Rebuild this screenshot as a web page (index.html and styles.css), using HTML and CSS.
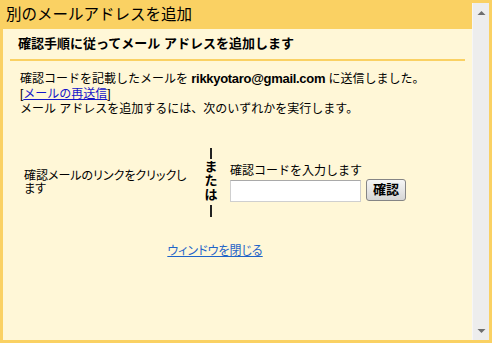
FILE: index.html
```html
<!DOCTYPE html>
<html lang="ja">
<head>
<meta charset="utf-8">
<title>別のメールアドレスを追加</title>
<link rel="stylesheet" href="styles.css">
</head>
<body>
<div class="frame">
  <div class="main">
    <div class="titlebar">別のメールアドレスを追加</div>
    <div class="content">
      <div class="section-header">確認手順に従ってメール アドレスを追加します</div>
      <div class="rule"></div>
      <div class="body">
        <p class="line">確認コードを記載したメールを <b class="email">rikkyotaro@gmail.com</b> に送信しました。</p>
        <p class="line">[<a class="resend" href="#">メールの再送信</a>]</p>
        <p class="line">メール アドレスを追加するには、次のいずれかを実行します。</p>
        <div class="options">
          <div class="opt-left">確認メールのリンクをクリックします</div>
          <div class="opt-or">
            <span class="bar bar-top"></span>
            <span class="or-ch">ま</span>
            <span class="or-ch">た</span>
            <span class="or-ch">は</span>
            <span class="bar bar-bottom"></span>
          </div>
          <div class="opt-right">
            <div class="code-label">確認コードを入力します</div>
            <div class="code-row">
              <input class="code-input" type="text">
              <button class="confirm-btn" type="button">確認</button>
            </div>
          </div>
        </div>
        <div class="close-row"><a class="close-link" href="#">ウィンドウを閉じる</a></div>
      </div>
    </div>
  </div>
  <div class="scrollbar">
    <svg class="arrow" width="9" height="6" viewBox="0 0 9 6"><path d="M0.5 5 L4.5 1 L8.5 5 Z" fill="#6e6e6e"/></svg>
    <svg class="arrow" width="9" height="6" viewBox="0 0 9 6"><path d="M0.5 1 L4.5 5 L8.5 1 Z" fill="#6e6e6e"/></svg>
  </div>
</div>
</body>
</html>
```

FILE: styles.css
```css
* { box-sizing: border-box; }

html, body {
  margin: 0;
  padding: 0;
}

body {
  width: 492px;
  height: 343px;
  overflow: hidden;
  font-family: "Liberation Sans", "Noto Sans CJK JP", sans-serif;
  color: #000;
}

.frame {
  width: 492px;
  height: 343px;
  padding: 3px;
  background: #fad163;
  display: flex;
}

.main {
  flex: 1;
  display: flex;
  flex-direction: column;
}

.titlebar {
  height: 26px;
  line-height: 24px;
  padding-left: 3px;
  font-size: 15.5px;
  color: #000;
}

.content {
  flex: 1;
  background: #fff7d7;
}

.section-header {
  padding: 7px 0 0 15px;
  font-size: 13px;
  font-weight: bold;
  line-height: 15px;
}

.rule {
  height: 2px;
  margin: 8px 7px 0 7px;
  background: #fad163;
}

.body {
  padding: 10px 0 0 17px;
  font-size: 12px;
}

.line {
  margin: 0;
  line-height: 15px;
}

.email {
  font-size: 13px;
  letter-spacing: -0.3px;
}

.resend {
  color: #1515c8;
}

.options {
  width: 390px;
  margin-top: 31px;
  display: flex;
  align-items: center;
}

.opt-left {
  width: 185px;
  padding: 0 15px 0 4px;
  line-height: 13px;
  font-feature-settings: "palt";
}

.opt-or {
  width: 12px;
  display: flex;
  flex-direction: column;
  align-items: center;
  font-weight: bold;
  font-size: 13px;
}

.bar {
  display: block;
  width: 2px;
  background: #222;
}

.bar-top {
  height: 11px;
  margin-bottom: 1px;
}

.bar-bottom {
  height: 12px;
  margin-top: 3px;
}

.or-ch {
  line-height: 14px;
}

.opt-right {
  margin-left: 13px;
}

.code-label {
  line-height: 14px;
}

.code-row {
  margin-top: 2px;
  display: flex;
  align-items: flex-start;
}

.code-input {
  width: 131px;
  height: 22px;
  margin: 0;
  padding: 0 3px;
  border: 1px solid #cfcfcf;
  border-top-color: #a9a9a9;
  background: #fff;
  font-size: 12px;
}

.confirm-btn {
  width: 40px;
  height: 22px;
  margin: -1px 0 0 5px;
  padding: 0;
  border: 1px solid #858585;
  border-radius: 3px;
  background: linear-gradient(#f6f6f6, #d6d6d6);
  font-family: "Liberation Sans", "Noto Sans CJK JP", sans-serif;
  font-size: 13px;
  font-weight: bold;
  line-height: 18px;
  color: #000;
}

.close-row {
  width: 390px;
  margin-top: 27px;
  text-align: center;
  line-height: 15px;
}

.close-link {
  color: #1f64c8;
  font-feature-settings: "palt";
}

.scrollbar {
  width: 17px;
  background: #ededed;
  border-left: 1px solid #f6f6f6;
  display: flex;
  flex-direction: column;
  justify-content: space-between;
  align-items: center;
  padding: 7px 0 6px 0;
}

.arrow {
  display: block;
}
```
